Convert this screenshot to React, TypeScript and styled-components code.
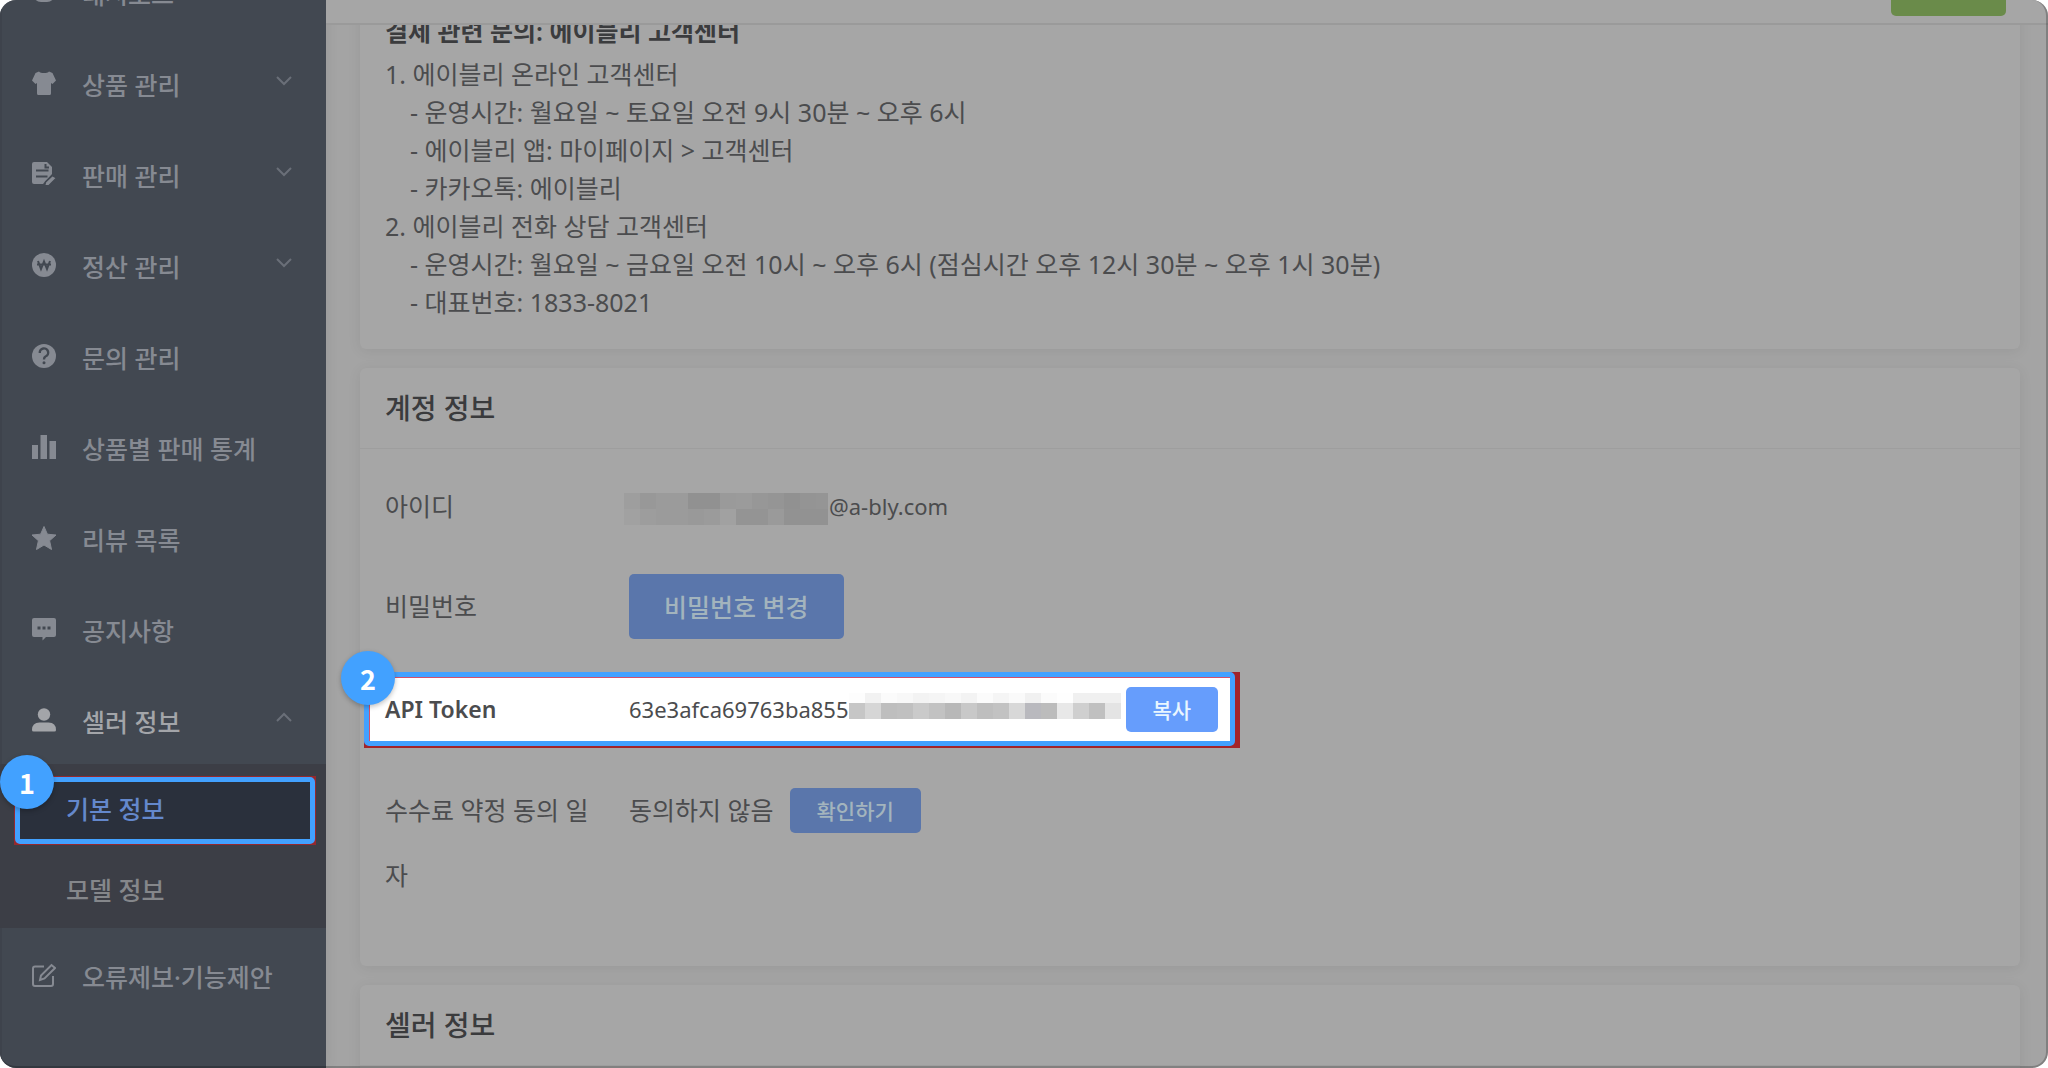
import React from "react";
import styled, { createGlobalStyle, css } from "styled-components";

const Global = createGlobalStyle`
  *, *::before, *::after { box-sizing: border-box; }
  body { margin: 0; background: #fff; }
  button, a, h1, h2, ul, dl, dd, p { margin: 0; padding: 0; }
  ul { list-style: none; }
`;

const Page = styled.div`
  position: relative;
  display: flex;
  height: 100vh;
  overflow: hidden;
  border-radius: 16px;
  background: #a4a4a4;
  color: #4b4c4e;
  font-family: "Noto Sans", "Noto Sans CJK KR", sans-serif;
  font-size: 25px;

  &::after {
    content: "";
    position: absolute;
    inset: 0;
    border: solid rgba(0, 0, 0, 0.22);
    border-width: 0 2px 2px 0;
    border-radius: 16px;
    pointer-events: none;
  }
`;

const Sidebar = styled.aside`
  flex: 0 0 326px;
  min-width: 0;
  background: #424851;
  border-left: 2px solid #3e434c;
  box-shadow: 2px 0 12px rgba(0, 0, 0, 0.06);
`;

const Menu = styled.ul`
  display: flex;
  flex-direction: column;
  gap: 6px;
  margin-top: -49px;
`;

const MenuLink = styled.a<{ $active?: boolean }>`
  display: flex;
  align-items: center;
  gap: 26px;
  height: 85px;
  padding: 0 34px 0 30px;
  color: ${(p) => (p.$active ? "#a3a5a9" : "#868a92")};
  font-weight: 500;
  line-height: 36px;
  text-decoration: none;
  white-space: nowrap;

  svg {
    display: block;
    flex: none;
    margin-bottom: 4px;
  }
`;

const Chevron = styled.svg`
  width: 16px;
  height: 16px;
  margin-left: auto;
  fill: none;
  stroke: #6a6f78;
  stroke-width: 2;
  && { margin-bottom: 10px; }
`;

const SubMenu = styled.ul`
  margin-left: -2px;
  padding-bottom: 2px;
  background: #3c3e46;
`;

const SubItem = styled.li`
  position: relative;
`;

const SubLink = styled.a<{ $current?: boolean }>`
  position: relative;
  display: flex;
  align-items: center;
  height: 81px;
  padding: 9px 0 0 66px;
  color: ${(p) => (p.$current ? "#6488cc" : "#85878b")};
  font-weight: 500;
  line-height: 36px;
  text-decoration: none;
`;

const frame = css`
  border: 5px solid #42a1ff;
  border-radius: 5px;
`;

const MenuHighlight = styled.div`
  position: absolute;
  inset: 12px 10px 0 14px;
  padding: 1px;
  background: #96282d;
`;

const MenuFrame = styled.div`
  ${frame}
  height: 100%;
  background: #2a303c;
`;

const Badge = styled.span`
  position: absolute;
  top: -21px;
  left: -14px;
  display: flex;
  align-items: center;
  justify-content: center;
  width: 54px;
  height: 54px;
  border-radius: 50%;
  background: #42a1ff;
  box-shadow: 0 2px 5px rgba(0, 0, 0, 0.25);
  color: #fff;
  font-family: "Noto Sans CJK KR", sans-serif;
  font-size: 27px;
  font-weight: 700;
  line-height: 27px;
`;

const RowBadge = styled(Badge)`
  left: -23px;
`;

const Content = styled.div`
  display: flex;
  flex: 1;
  flex-direction: column;
  min-width: 0;
`;

const TopBar = styled.header`
  display: flex;
  flex: 0 0 25px;
  align-items: flex-end;
  justify-content: flex-end;
  overflow: hidden;
  padding: 0 42px 7px 0;
  border-bottom: 2px solid #9a9a9a;
  background: #a6a6a6;
`;

const SaveButton = styled.button`
  flex: none;
  width: 115px;
  height: 45px;
  border: 0;
  border-radius: 5px;
  background: #6a8b4a;
`;

const Main = styled.main`
  flex: 1;
  min-height: 0;
  overflow: hidden;
  padding: 0 28px 0 34px;
`;

const Stack = styled.div`
  display: flex;
  flex-direction: column;
  gap: 19px;
  margin-top: -37px;
`;

const Card = styled.section`
  border-radius: 6px;
  background: #a6a6a6;
  box-shadow: 0 2px 14px rgba(0, 0, 0, 0.07);
`;

const Notice = styled.div`
  padding: 24px 25px 28px;
  line-height: 38px;

  h2 {
    margin-bottom: 5px;
    color: #3b3c3e;
    font-size: 25px;
    font-weight: 600;
  }

  ul { padding-left: 25px; }
`;

const CardTitle = styled.h2`
  padding: 19px 25px;
  border-bottom: 1px solid #9e9e9e;
  color: #3a3b3d;
  font-size: 28px;
  font-weight: 500;
  line-height: 42px;
`;

const Fields = styled.dl`
  display: flex;
  flex-direction: column;
  align-items: flex-start;
  gap: 35px;
  padding: 25px 25px 58px;
`;

const Field = styled.div`
  position: relative;
  display: grid;
  grid-template-columns: 220px auto;
  column-gap: 24px;
  line-height: 65px;
`;

const TokenField = styled(Field)`
  padding: 3px 0 1px;
`;

const Label = styled.dt<{ $latin?: boolean }>`
  position: relative;
  font-size: ${(p) => (p.$latin ? 23 : 25)}px;
  font-weight: ${(p) => (p.$latin ? 600 : 400)};
`;

const Value = styled.dd<{ $latin?: boolean; $gap?: number }>`
  position: relative;
  display: flex;
  align-items: center;
  gap: ${(p) => p.$gap ?? 0}px;
  height: 65px;
  font-size: ${(p) => (p.$latin ? 22 : 25)}px;
  white-space: nowrap;
`;

const Button = styled.button<{ $large?: boolean; $bright?: boolean }>`
  height: ${(p) => (p.$large ? 65 : 45)}px;
  padding: 0 ${(p) => (p.$large ? 35 : 27)}px;
  border: 0;
  border-radius: 5px;
  background: ${(p) => (p.$bright ? "#669dfc" : "#5a76ab")};
  color: ${(p) => (p.$bright ? "#e9f6ff" : "#a3b4bd")};
  font-family: inherit;
  font-size: ${(p) => (p.$large ? 25 : 21)}px;
  font-weight: 500;
  line-height: 32px;
`;

const TokenHighlight = styled.div`
  position: absolute;
  inset: -2px -22px -5px -21px;
  padding: 0 5px 2px 0;
  background: #a32429;
`;

const TokenFrame = styled.div`
  ${frame}
  height: 100%;
  background: #fff;
  box-shadow: inset 1px 1px 0 #d4506a;
`;

const IdMosaic = styled.span`
  display: grid;
  grid-template: 16px 16px / repeat(12, 16px) 12px;
  margin: 4px 1px 0 -5px;
`;

const TokenMosaic = styled.span`
  display: grid;
  grid-template: 10px 16px / repeat(17, 16px);
  margin-right: 5px;
  padding-bottom: 8px;
`;

const Tile = styled.i<{ $tone: string }>`
  background: ${(p) => p.$tone};
`;

const idTiles = [
  "#9e9e9e", "#989898", "#9b9b9b", "#9b9b9b", "#919191", "#919191", "#9a9a9a", "#9b9b9b", "#979797", "#959595", "#919191", "#949494", "#959595",
  "#a1a1a1", "#9d9d9d", "#9b9b9b", "#9b9b9b", "#999999", "#9b9b9b", "#a1a1a1", "#949494", "#949494", "#9a9a9a", "#929292", "#929292", "#929292",
];

const tokenTiles = [
  "#fdfdfd", "#f2f2f2", "#fbfbfb", "#f8f8f8", "#f3f3f3", "#f5f5f5", "#f8f8f8", "#f3f3f3", "#fbfbfb", "#f5f5f5", "#fafafa", "#f1f1f1", "#fbfbfb", "#fefefe", "#f0f0f0", "#f0f0f0", "#f0f0f0",
  "#c6c6c6", "#d6d6d6", "#bebebe", "#c0c0c0", "#cacaca", "#c2c2c2", "#b8b8b8", "#c8c8c8", "#bebebe", "#c2c2c2", "#d8d8d8", "#b9b9be", "#bcbcbc", "#e8e8e8", "#cfcfcf", "#c0c0c0", "#e4e4e4",
];

type IconName = "dashboard" | "shirt" | "order" | "won" | "help" | "chart" | "star" | "chat" | "user" | "edit";

const hole = "#424851";

const shapes: Record<IconName, React.ReactNode> = {
  dashboard: <rect x="1" y="1" width="22" height="21" rx="8" fill="currentColor" />,
  shirt: (
    <path
      d="M7 0.500C8.500 2.600 15.500 2.600 17 0.500L20.500 2L24 9.500L20.500 13L19 12V22.500Q19 24 17.500 24H6.500Q5 24 5 22.500V12L3.500 13L0 9.500L3.500 2Z"
      fill="currentColor"
    />
  ),
  order: (
    <>
      <path d="M2 0H15L20 5V12L11 22H2Q0 22 0 20V2Q0 0 2 0Z" fill="currentColor" />
      <path d="M4 8.500H16.500M4 14.500H15.500M13.500 2V5.500H17" stroke={hole} strokeWidth="2" fill="none" />
      <path d="M12.500 24L13.500 20L20.500 13.500L24.500 16L17 23.500Z" fill="currentColor" stroke={hole} strokeWidth="1.500" />
    </>
  ),
  won: (
    <>
      <circle cx="12" cy="12" r="12" fill="currentColor" />
      <path d="M6 8L9 16L12 8.500L15 16L18 8M5 11.500H19" stroke={hole} strokeWidth="2" fill="none" />
    </>
  ),
  help: (
    <>
      <circle cx="12" cy="12" r="12" fill="currentColor" />
      <path d="M7.800 9A4.200 4.200 0 1 1 13.500 12.500Q12 13.300 12 15.500" stroke={hole} strokeWidth="2.400" fill="none" />
      <circle cx="12" cy="18.800" r="1.500" fill={hole} />
    </>
  ),
  chart: (
    <path d="M0 10H6V24H0ZM8.500 0H15V24H8.500ZM17.500 6H24V24H17.500Z" fill="currentColor" />
  ),
  star: (
    <path
      d="M12 0.500L15.400 8.200L24 9L17.600 14.700L19.500 23.500L12 19L4.500 23.500L6.400 14.700L0 9L8.600 8.200Z"
      fill="currentColor"
      stroke="currentColor"
      strokeLinejoin="round"
    />
  ),
  chat: (
    <>
      <path d="M2 1H22Q24 1 24 3V18Q24 20 22 20H14L10.500 23.500V20H2Q0 20 0 18V3Q0 1 2 1Z" fill="currentColor" />
      <path d="M5.500 11H8.500M10.500 11H13.500M15.500 11H18.500" stroke={hole} strokeWidth="3" />
    </>
  ),
  user: (
    <>
      <circle cx="12" cy="6.500" r="6.200" fill="currentColor" />
      <path d="M0 22Q0 14.500 7.500 14.500H16.500Q24 14.500 24 22Q24 23.500 22.500 23.500H1.500Q0 23.500 0 22Z" fill="currentColor" />
    </>
  ),
  edit: (
    <g fill="none" stroke="currentColor" strokeWidth="2">
      <path d="M12 3.500H3Q1 3.500 1 5.500V21Q1 23 3 23H19Q21 23 21 21V13" />
      <path d="M8 17L9 12.500L19.500 2L23 5L12.500 15.500Z" />
    </g>
  ),
};

const Icon = ({ name }: { name: IconName }) => (
  <svg width="24" height="24" viewBox="0 0 24 24" aria-hidden="true">
    {shapes[name]}
  </svg>
);

const menu: { icon: IconName; label: string; arrow?: boolean }[] = [
  { icon: "dashboard", label: "대시보드" },
  { icon: "shirt", label: "상품 관리", arrow: true },
  { icon: "order", label: "판매 관리", arrow: true },
  { icon: "won", label: "정산 관리", arrow: true },
  { icon: "help", label: "문의 관리" },
  { icon: "chart", label: "상품별 판매 통계" },
  { icon: "star", label: "리뷰 목록" },
  { icon: "chat", label: "공지사항" },
];

const Arrow = ({ up }: { up?: boolean }) => (
  <Chevron viewBox="0 0 16 16" aria-hidden="true">
    <path d={up ? "M1 12L8 5L15 12" : "M1 5L8 12L15 5"} />
  </Chevron>
);

export default function App() {
  return (
    <>
      <Global />
      <Page>
        <Sidebar>
          <nav>
            <Menu>
              {menu.map((item) => (
                <li key={item.label}>
                  <MenuLink href="#">
                    <Icon name={item.icon} />
                    <span>{item.label}</span>
                    {item.arrow && <Arrow />}
                  </MenuLink>
                </li>
              ))}
              <li>
                <MenuLink href="#" $active>
                  <Icon name="user" />
                  <span>셀러 정보</span>
                  <Arrow up />
                </MenuLink>
                <SubMenu>
                  <SubItem>
                    <MenuHighlight>
                      <MenuFrame />
                      <Badge>1</Badge>
                    </MenuHighlight>
                    <SubLink href="#" $current>기본 정보</SubLink>
                  </SubItem>
                  <SubItem>
                    <SubLink href="#">모델 정보</SubLink>
                  </SubItem>
                </SubMenu>
              </li>
              <li>
                <MenuLink href="#">
                  <Icon name="edit" />
                  <span>오류제보·기능제안</span>
                </MenuLink>
              </li>
            </Menu>
          </nav>
        </Sidebar>

        <Content>
          <TopBar>
            <SaveButton type="button" aria-label="저장" />
          </TopBar>
          <Main>
            <Stack>
              <Card>
                <Notice>
                  <h2>결제 관련 문의: 에이블리 고객센터</h2>
                  <p>1. 에이블리 온라인 고객센터</p>
                  <ul>
                    <li>- 운영시간: 월요일 ~ 토요일 오전 9시 30분 ~ 오후 6시</li>
                    <li>- 에이블리 앱: 마이페이지 &gt; 고객센터</li>
                    <li>- 카카오톡: 에이블리</li>
                  </ul>
                  <p>2. 에이블리 전화 상담 고객센터</p>
                  <ul>
                    <li>- 운영시간: 월요일 ~ 금요일 오전 10시 ~ 오후 6시 (점심시간 오후 12시 30분 ~ 오후 1시 30분)</li>
                    <li>- 대표번호: 1833-8021</li>
                  </ul>
                </Notice>
              </Card>

              <Card>
                <CardTitle>계정 정보</CardTitle>
                <Fields>
                  <Field>
                    <Label>아이디</Label>
                    <Value $latin>
                      <IdMosaic>
                        {idTiles.map((tone, i) => <Tile key={i} $tone={tone} />)}
                      </IdMosaic>
                      @a-bly.com
                    </Value>
                  </Field>
                  <Field>
                    <Label>비밀번호</Label>
                    <Value>
                      <Button type="button" $large>비밀번호 변경</Button>
                    </Value>
                  </Field>
                  <TokenField>
                    <TokenHighlight>
                      <TokenFrame />
                      <RowBadge>2</RowBadge>
                    </TokenHighlight>
                    <Label $latin>API Token</Label>
                    <Value $latin>
                      63e3afca69763ba855
                      <TokenMosaic>
                        {tokenTiles.map((tone, i) => <Tile key={i} $tone={tone} />)}
                      </TokenMosaic>
                      <Button type="button" $bright>복사</Button>
                    </Value>
                  </TokenField>
                  <Field>
                    <Label>수수료 약정 동의 일자</Label>
                    <Value $gap={16}>
                      동의하지 않음
                      <Button type="button">확인하기</Button>
                    </Value>
                  </Field>
                </Fields>
              </Card>

              <Card>
                <CardTitle>셀러 정보</CardTitle>
                <Fields />
              </Card>
            </Stack>
          </Main>
        </Content>
      </Page>
    </>
  );
}
